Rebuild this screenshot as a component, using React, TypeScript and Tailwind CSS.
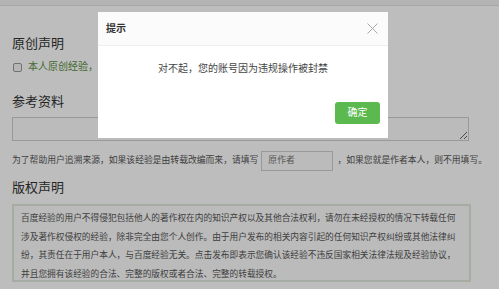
import React from 'react';

const copyrightLines = [
  '百度经验的用户不得侵犯包括他人的著作权在内的知识产权以及其他合法权利，请勿在未经授权的情况下转载任何',
  '涉及著作权侵权的经验，除非完全由您个人创作。由于用户发布的相关内容引起的任何知识产权纠纷或其他法律纠',
  '纷，其责任在于用户本人，与百度经验无关。点击发布即表示您确认该经验不违反国家相关法律法规及经验协议，',
  '并且您拥有该经验的合法、完整的版权或者合法、完整的转载授权。',
];

const CloseIcon = () => (
  <svg width="11" height="11" viewBox="0 0 11 11" fill="none" stroke="#aaaaaa" strokeWidth="1">
    <path d="M0.5 0.5 L10.5 10.5 M10.5 0.5 L0.5 10.5" />
  </svg>
);

export default function App() {
  return (
    <div
      className="relative w-[499px] h-[289px] overflow-hidden bg-white text-[#333]"
      style={{ fontFamily: '"Liberation Sans", "Noto Sans CJK SC", sans-serif' }}
    >
      {/* Page */}
      <div className="h-[6px] bg-[#f3f3f3] border-b border-[#e2e2e2]" />
      <div className="px-[12px]">
        <h2 className="mt-[29px] text-[13px] leading-[18px] font-normal text-[#333]">原创声明</h2>
        <div className="mt-[7px] flex items-center h-[14px]">
          <span className="ml-[1px] w-[9px] h-[9px] rounded-[2px] border border-[#999] bg-[#f6f6f6]" />
          <span className="ml-[6px] text-[10px] leading-[14px] text-[#5a8f45]">本人原创经验，</span>
        </div>
        <h2 className="mt-[19px] text-[13px] leading-[18px] font-normal text-[#333]">参考资料</h2>
        <textarea
          readOnly
          className="mt-[6px] block w-[457px] h-[24px] border border-[#cfcfcf] bg-[#fdfdfd] outline-none"
        />
        <div className="mt-[10px] flex items-center h-[20px] text-[8.8px] text-[#555] whitespace-nowrap">
          <span>为了帮助用户追溯来源，如果该经验是由转载改编而来，请填写</span>
          <div className="ml-[3px] w-[81px] h-[20px] border border-[#cfcfcf] bg-[#fcfcfc] flex items-center pl-[6px] text-[#777]">
            原作者
          </div>
          <span className="ml-[4px]">，如果您就是作者本人，则不用填写。</span>
        </div>
        <h2 className="mt-[8px] text-[13px] leading-[18px] font-normal text-[#333]">版权声明</h2>
        <div className="mt-[7px] w-[459px] h-[78px] border-2 border-[#dfe9d9] bg-[#fcfcfc] pl-[7px] pt-[3px] text-[8.7px] leading-[18.5px] text-[#555] whitespace-nowrap">
          {copyrightLines.map((line) => (
            <div key={line}>{line}</div>
          ))}
        </div>
      </div>

      {/* Overlay */}
      <div className="absolute inset-0 bg-[rgba(0,0,0,0.26)]" />

      {/* Dialog */}
      <div className="absolute left-[98px] top-[12px] w-[290px] h-[126px] bg-white flex flex-col">
        <div className="h-[34px] flex items-center justify-between pl-[8px] pr-[10px] border-b border-[#eeeeee] bg-[#fbfbfb]">
          <span className="text-[10px] font-bold text-[#333]">提示</span>
          <CloseIcon />
        </div>
        <div className="flex-1 flex flex-col">
          <p className="mt-[16px] text-center text-[10px] leading-[14px] text-[#444]">
            对不起，您的账号因为违规操作被封禁
          </p>
          <div className="mt-auto mb-[14px] mr-[8px] flex justify-end">
            <button className="w-[45px] h-[22px] rounded-[3px] bg-[#5cb94f] text-white text-[10px] leading-[22px]">
              确定
            </button>
          </div>
        </div>
      </div>
    </div>
  );
}
